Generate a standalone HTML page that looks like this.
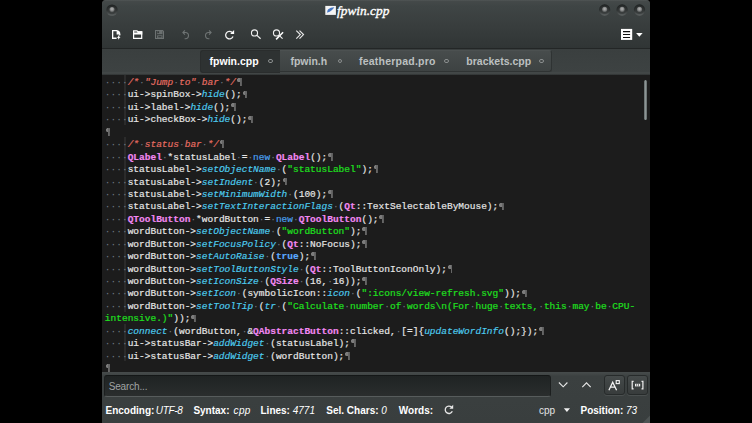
<!DOCTYPE html>
<html><head><meta charset="utf-8">
<style>
*{margin:0;padding:0;box-sizing:border-box}
html,body{width:752px;height:423px;background:#000;overflow:hidden}
body{position:relative;font-family:"Liberation Sans",sans-serif}
#win{position:absolute;left:102px;top:0;width:548px;height:423px;background:#3b3f3f;border-radius:4px 4px 0 0;overflow:hidden}
#top{position:absolute;left:0;top:0;width:548px;height:49px;background:linear-gradient(#525757 0,#444949 1.3px,#3f4545 6px,#393e3e 24px,#303535 48px);border-bottom:1px solid #232626}
#tabbar{position:absolute;left:0;top:49px;width:548px;height:26px;background:linear-gradient(#3a3f3f,#3d4242 23px,#474c4c 24px,#2e3232 26px)}
#code{position:absolute;left:0;top:75px;width:548px;height:297px;background:#1c1c1c;overflow:hidden}
#bottom{position:absolute;left:0;top:372px;width:548px;height:51px;background:linear-gradient(#464b4b 0,#424747 2px,#3b4040 4px,#393e3e 51px)}
pre{position:absolute;left:2.85px;top:2px;font-family:"Liberation Mono",monospace;font-size:9.5px;line-height:12.44px;color:#e6e6e6;white-space:pre;-webkit-text-stroke:0.18px currentColor}
.d{color:#707a84;-webkit-text-stroke:0}
.p{position:relative;color:transparent;-webkit-text-stroke:0}
.p::before{content:"";position:absolute;left:0.9px;top:1.2px;width:4.6px;height:7.8px;background:linear-gradient(#666,#666) 2.7px 0/1.9px 100% no-repeat,radial-gradient(circle at 1.9px 2.1px,#7c7c7c 1.7px,rgba(124,124,124,0) 2.3px) 0 0/4px 4.5px no-repeat,linear-gradient(#5a5a5a,#5a5a5a) 1.9px 0/1.5px 1.2px no-repeat}
.c{color:#e66c62;font-style:italic}
.c .d{color:#707a84;-webkit-text-stroke:0}
.f{color:#4ccbee;font-style:italic}
.t{color:#f288f2;font-weight:bold}
.k{color:#4aa0f0}
.b{color:#5aa8ff;font-weight:bold}
.s{color:#1ee01e}
.o{font-weight:bold}
.guide{position:absolute;left:22px;top:0;width:2px;background:#2b2b2b}
#title{position:absolute;left:235px;top:0.5px;font-family:"Liberation Serif",serif;font-style:italic;font-size:13.4px;line-height:20px;color:#fff;-webkit-text-stroke:0.35px #fff}
.tab{position:absolute;top:0.5px;height:23px;font-weight:bold;font-size:10.5px;line-height:23px;color:#bcc0c0}
#tabact{position:absolute;left:98px;top:0.8px;width:80px;height:23px;background:#2e3232;border:1px solid #2a2d2d;border-right:0;border-radius:3px 0 0 3px}
#tabin{position:absolute;left:176px;top:0.8px;width:274px;height:22px;background:linear-gradient(#474c4c,#3d4242);border-radius:0 3px 3px 0;border-top:1px solid #4c5151;border-right:1px solid #2f3333;border-bottom:1px solid #2f3333}
.ring{position:absolute;top:9.7px;width:4.8px;height:4.8px;border-radius:50%;border:1px solid #8a8e8e}
#search{position:absolute;left:1.7px;top:3px;width:447px;height:21.5px;background:linear-gradient(#1f2323,#2a2d2d);border:1px solid #1c1f1f;border-top-color:#141717;border-bottom-color:#575c5c;border-radius:3px;color:#a0a3a3;font-size:10px;letter-spacing:-0.15px;line-height:21px;padding-left:4px}
.btn{position:absolute;top:3.4px;width:20.6px;height:19.6px;background:linear-gradient(#464b4b,#3f4444 40%,#383c3c);border:1px solid #272b2b;border-radius:3px;box-shadow:0 1px 0 #4a4f4f}
.st{position:absolute;top:31.5px;font-size:10px;line-height:14px;color:#fff;white-space:nowrap}
.st b{font-weight:bold}
.st i{font-style:italic}
</style></head><body>
<div id="win">
  <div id="top">
    <div id="title">fpwin.cpp</div>
  </div>
  <div id="tabbar">
    <div id="tabin"></div>
    <div id="tabact"></div>
    <div class="tab" style="left:107.6px;color:#fff">fpwin.cpp</div>
    <div class="ring" style="left:166px"></div>
    <div class="tab" style="left:188.4px">fpwin.h</div>
    <div class="ring" style="left:235.5px"></div>
    <div class="tab" style="left:257px;letter-spacing:0.22px">featherpad.pro</div>
    <div class="ring" style="left:342.2px"></div>
    <div class="tab" style="left:364.3px">brackets.cpp</div>
    <div class="ring" style="left:437.3px"></div>
  </div>
  <div id="code">
    <div class="guide" style="top:0;height:50px"></div>
    <div class="guide" style="top:62px;height:175px"></div>
    <div class="guide" style="top:249px;height:37px"></div>
<pre><span class="d">····</span><span class="c">/*<span class="d">·</span>"Jump<span class="d">·</span>to"<span class="d">·</span>bar<span class="d">·</span>*/</span><span class="p">¶</span>
<span class="d">····</span>ui-&gt;spinBox-&gt;<span class="f">hide</span>();<span class="p">¶</span>
<span class="d">····</span>ui-&gt;label-&gt;<span class="f">hide</span>();<span class="p">¶</span>
<span class="d">····</span>ui-&gt;checkBox-&gt;<span class="f">hide</span>();<span class="p">¶</span>
<span class="p">¶</span>
<span class="d">····</span><span class="c">/*<span class="d">·</span>status<span class="d">·</span>bar<span class="d">·</span>*/</span><span class="p">¶</span>
<span class="d">····</span><span class="t">QLabel</span><span class="d">·</span>*statusLabel<span class="d">·</span><span class="o">=</span><span class="d">·</span><span class="k">new</span><span class="d">·</span><span class="t">QLabel</span>();<span class="p">¶</span>
<span class="d">····</span>statusLabel-&gt;<span class="f">setObjectName</span><span class="d">·</span>(<span class="s">"statusLabel"</span>);<span class="p">¶</span>
<span class="d">····</span>statusLabel-&gt;<span class="f">setIndent</span><span class="d">·</span>(2);<span class="p">¶</span>
<span class="d">····</span>statusLabel-&gt;<span class="f">setMinimumWidth</span><span class="d">·</span>(100);<span class="p">¶</span>
<span class="d">····</span>statusLabel-&gt;<span class="f">setTextInteractionFlags</span><span class="d">·</span>(<span class="t">Qt</span>::TextSelectableByMouse);<span class="p">¶</span>
<span class="d">····</span><span class="t">QToolButton</span><span class="d">·</span>*wordButton<span class="d">·</span><span class="o">=</span><span class="d">·</span><span class="k">new</span><span class="d">·</span><span class="t">QToolButton</span>();<span class="p">¶</span>
<span class="d">····</span>wordButton-&gt;<span class="f">setObjectName</span><span class="d">·</span>(<span class="s">"wordButton"</span>);<span class="p">¶</span>
<span class="d">····</span>wordButton-&gt;<span class="f">setFocusPolicy</span><span class="d">·</span>(<span class="t">Qt</span>::NoFocus);<span class="p">¶</span>
<span class="d">····</span>wordButton-&gt;<span class="f">setAutoRaise</span><span class="d">·</span>(<span class="b">true</span>);<span class="p">¶</span>
<span class="d">····</span>wordButton-&gt;<span class="f">setToolButtonStyle</span><span class="d">·</span>(<span class="t">Qt</span>::ToolButtonIconOnly);<span class="p">¶</span>
<span class="d">····</span>wordButton-&gt;<span class="f">setIconSize</span><span class="d">·</span>(<span class="t">QSize</span><span class="d">·</span>(16,<span class="d">·</span>16));<span class="p">¶</span>
<span class="d">····</span>wordButton-&gt;<span class="f">setIcon</span><span class="d">·</span>(symbolicIcon::<span class="f">icon</span><span class="d">·</span>(<span class="s">":icons/view-refresh.svg"</span>));<span class="p">¶</span>
<span class="d">····</span>wordButton-&gt;<span class="f">setToolTip</span><span class="d">·</span>(<span class="f">tr</span><span class="d">·</span>(<span class="s">"Calculate<span class="d">·</span>number<span class="d">·</span>of<span class="d">·</span>words\n(For<span class="d">·</span>huge<span class="d">·</span>texts,<span class="d">·</span>this<span class="d">·</span>may<span class="d">·</span>be<span class="d">·</span>CPU-</span>
<span class="s">intensive.)"</span>));<span class="p">¶</span>
<span class="d">····</span><span class="f">connect</span><span class="d">·</span>(wordButton,<span class="d">·</span>&amp;<span class="t">QAbstractButton</span>::clicked,<span class="d">·</span>[<span class="o">=</span>]{<span class="f">updateWordInfo</span>();});<span class="p">¶</span>
<span class="d">····</span>ui-&gt;statusBar-&gt;<span class="f">addWidget</span><span class="d">·</span>(statusLabel);<span class="p">¶</span>
<span class="d">····</span>ui-&gt;statusBar-&gt;<span class="f">addWidget</span><span class="d">·</span>(wordButton);<span class="p">¶</span>
<span class="p">¶</span>
</pre>
    <div style="position:absolute;left:542.3px;top:5px;width:3px;height:40px;border-radius:1.5px;background:linear-gradient(90deg,#5f6767,#8c9494,#5f6767)"></div>
  </div>
  <div id="bottom">
    <div id="search">Search...</div>
    <div class="btn" style="left:502.4px"></div>
    <div class="btn" style="left:525.4px"></div>
    <div class="st" style="left:3.5px"><b>Encoding:</b> <i style="margin-left:-1.4px;letter-spacing:-0.3px">UTF-8</i></div>
    <div class="st" style="left:91.4px"><b>Syntax:</b> <i style="margin-left:1.2px;letter-spacing:0.4px">cpp</i></div>
    <div class="st" style="left:158.5px"><b>Lines:</b> <i>4771</i></div>
    <div class="st" style="left:224.3px"><b>Sel. Chars:</b> <i>0</i></div>
    <div class="st" style="left:296.8px"><b>Words:</b></div>
    <div class="st" style="left:437px;color:#e4e4e4">cpp</div>
    <div class="st" style="left:478.5px"><b>Position:</b> <i>73</i></div>
  </div>
</div>
<svg width="752" height="423" style="position:absolute;left:0;top:0" fill="none" stroke-linecap="butt">
  <!-- title icon -->
  <rect x="325.3" y="5.9" width="10.6" height="9" fill="#f4f4f4"/>
  <path d="M326.4 13.8 L327.4 12.3 C326.8 10.2 329 7.6 334.4 7.3 C332.6 9.6 330.6 11.9 327.6 12.5 Z" fill="#4676c2"/>
  <!-- new doc -->
  <path d="M117 30.65 H112.65 V38.25 H116.6" stroke="#fff" stroke-width="1.3"/>
  <path d="M116.6 30.1 Q120.3 30.4 120.4 34.4 H116.6Z" fill="#fff"/>
  <path d="M119.7 34 V35.4" stroke="#fff" stroke-width="1.2"/>
  <path d="M118.7 35.1 L119.4 36.7 L120.5 37.3 L119.4 37.9 L118.7 39.7 L118 37.9 L116.9 37.3 L118 36.7Z" fill="#fff"/>
  <!-- folder -->
  <path d="M133.6 30.9 H137 L138 31.9 H141.7 V38.4 H133.6Z" stroke="#fff" stroke-width="1.2"/>
  <path d="M137.3 31.3 H142.3 V34.5 H133 V32.6 H137.6Z" fill="#fff"/>
  <!-- save -->
  <path d="M155.55 30.55 H162.6 L163.45 31.4 V38.45 H155.55Z" stroke="#6d7272" stroke-width="1.1"/>
  <rect x="157.1" y="31" width="5.4" height="3.2" fill="#6a6f6f"/>
  <rect x="157.4" y="31.2" width="1.7" height="1.9" fill="#383c3c"/>
  <rect x="157.1" y="35.3" width="5.4" height="2.7" fill="#6a6f6f"/>
  <rect x="158.2" y="36.1" width="3.3" height="1.3" fill="#383c3c"/>
  <!-- undo -->
  <path d="M183 32.5 H185.4 A3.1 3.1 0 0 1 185.4 38.7 H184.6" stroke="#6f7474" stroke-width="1.1"/>
  <path d="M184.9 30.4 L182.9 32.5 L184.9 34.6" stroke="#6f7474" stroke-width="1.1"/>
  <!-- redo -->
  <path d="M211 32.5 H208.6 A3.1 3.1 0 0 0 208.6 38.7 H209.4" stroke="#6f7474" stroke-width="1.1"/>
  <path d="M209.1 30.4 L211.1 32.5 L209.1 34.6" stroke="#6f7474" stroke-width="1.1"/>
  <!-- reload -->
  <path d="M232.2 32.5 A3.8 3.8 0 1 0 233 36.5" stroke="#f2f2f2" stroke-width="1.3"/>
  <path d="M234.1 30.1 V34 H230.2Z" fill="#fff"/>
  <!-- search -->
  <circle cx="254.5" cy="32.9" r="3.05" stroke="#f0f0f0" stroke-width="1.1"/>
  <path d="M256.7 35.1 L260.6 38.8" stroke="#eee" stroke-width="1.2"/>
  <!-- replace -->
  <circle cx="276.5" cy="32.9" r="3.05" stroke="#f0f0f0" stroke-width="1.1"/>
  <path d="M276.1 39.4 L283.1 32.3" stroke="#fff" stroke-width="1.5"/>
  <path d="M279.4 35.6 L282.6 38.7" stroke="#eee" stroke-width="1.1"/>
  <!-- >> -->
  <path d="M296.3 30.6 L300.3 34.6 L296.3 38.6 M299.5 30.6 L303.5 34.6 L299.5 38.6" stroke="#e8e8e8" stroke-width="1.15"/>
  <!-- menu -->
  <rect x="621" y="28.9" width="11.2" height="11" fill="#fff"/>
  <path d="M623 31.6 H630.1 M623 34.5 H630.1 M623 37.4 H630.1" stroke="#111" stroke-width="1.05"/>
  <path d="M636.1 32.9 H642.6 L639.35 36.8Z" fill="#fff"/>
  <!-- chevrons -->
  <path d="M558.9 382.5 L563.2 386.8 L567.4 382.5" stroke="#e6e6e6" stroke-width="1.15"/>
  <path d="M582.3 387.2 L586.5 382.9 L590.7 387.2" stroke="#e6e6e6" stroke-width="1.15"/>
  <defs>
    <linearGradient id="ring" x1="0" y1="0" x2="0" y2="1"><stop offset="0" stop-color="#1e2121"/><stop offset="0.5" stop-color="#2c3030"/><stop offset="1" stop-color="#5f6464"/></linearGradient>
    <linearGradient id="inner" x1="0" y1="0" x2="0" y2="1"><stop offset="0" stop-color="#262929"/><stop offset="1" stop-color="#3d4141"/></linearGradient>
    <radialGradient id="ball" cx="0.5" cy="0.4" r="0.6"><stop offset="0" stop-color="#b4b4b4"/><stop offset="0.5" stop-color="#8c8e8e"/><stop offset="1" stop-color="#505353"/></radialGradient>
  </defs>
  <g id="lights">
    <g transform="translate(112 10.1)"><circle r="5.7" fill="url(#ring)"/><circle r="4.4" cy="-0.3" fill="url(#inner)"/><circle r="2.6" cy="-0.55" fill="url(#ball)"/></g>
    <g transform="translate(604.65 10)"><circle r="5.7" fill="url(#ring)"/><circle r="4.4" cy="-0.3" fill="url(#inner)"/><circle r="2.6" cy="-0.55" fill="url(#ball)"/></g>
    <g transform="translate(622.1 10)"><circle r="5.7" fill="url(#ring)"/><circle r="4.4" cy="-0.3" fill="url(#inner)"/><circle r="2.6" cy="-0.55" fill="url(#ball)"/></g>
    <g transform="translate(639.5 10)"><circle r="5.7" fill="url(#ring)"/><circle r="4.4" cy="-0.3" fill="url(#inner)"/><circle r="2.6" cy="-0.55" fill="url(#ball)"/></g>
  </g>
  <!-- match case A -->
  <path d="M608.9 390.3 L612.7 382.3 L616.6 390.3 M610.4 387.2 H615.1" stroke="#f2f2f2" stroke-width="1.3"/>
  <rect x="616.2" y="380.6" width="3.1" height="3" stroke="#f2f2f2" stroke-width="1.1"/>
  <!-- whole word [...] -->
  <path d="M633.6 381.3 H632.2 V388.8 H633.6 M641.5 381.3 H642.9 V388.8 H641.5" stroke="#f0f0f0" stroke-width="1.2"/>
  <rect x="635" y="383.8" width="5.2" height="2.6" fill="#f0f0f0"/>
  <path d="M636.7 383.8 V386.4 M638.5 383.8 V386.4" stroke="#2e3232" stroke-width="0.6"/>
  <!-- status refresh -->
  <path d="M451.6 407.2 A3.7 3.7 0 1 0 452.3 411.3" stroke="#e8e8e8" stroke-width="1.3"/>
  <path d="M453.2 404.8 V408.7 H449.4Z" fill="#e8e8e8"/>
  <!-- status arrow -->
  <path d="M563.8 408.2 H570 L566.9 412Z" fill="#f0f0f0"/>
  <!-- resize grip -->
  <path d="M650 415.5 V423 H642.5Z" fill="#4d5353"/>
</svg>
</body></html>
